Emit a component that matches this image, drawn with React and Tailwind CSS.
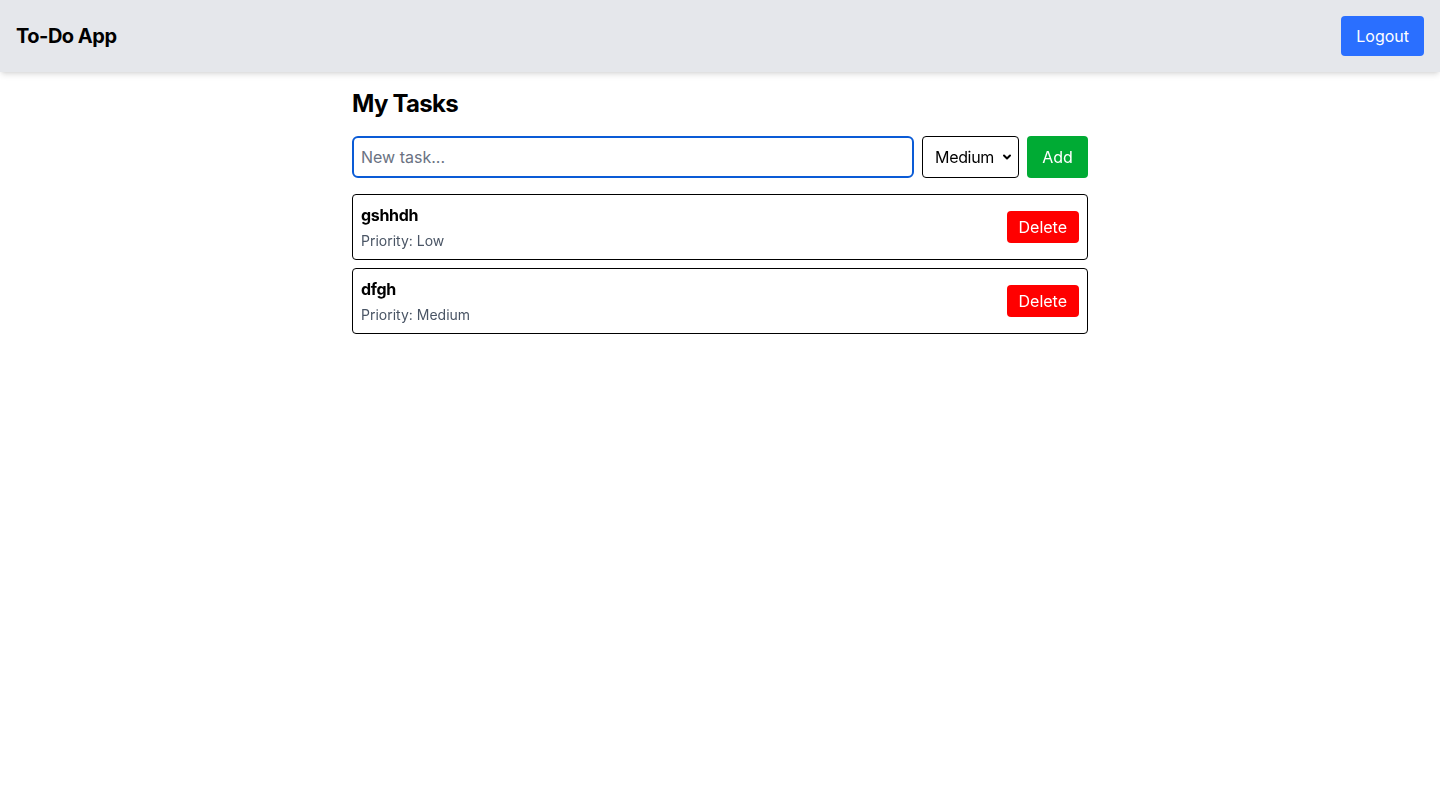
import React, { useState } from 'react';

const initialTasks = [
  { id: 1, title: 'gshhdh', priority: 'Low' },
  { id: 2, title: 'dfgh', priority: 'Medium' },
];

const App = () => {
  const [tasks, setTasks] = useState(initialTasks);
  const [text, setText] = useState('');
  const [priority, setPriority] = useState('Medium');

  const addTask = () => {
    if (!text.trim()) return;
    setTasks([...tasks, { id: Date.now(), title: text, priority }]);
    setText('');
  };

  const deleteTask = (id) => {
    setTasks(tasks.filter((t) => t.id !== id));
  };

  return (
    <div className="min-h-screen bg-white text-black font-['Inter','Liberation_Sans',sans-serif]">
      <nav className="flex items-center justify-between bg-[#e5e7eb] px-4 py-4 shadow-md">
        <h1 className="text-xl font-bold tracking-[-0.025em]">To-Do App</h1>
        <button className="rounded bg-[#2a6fff] px-[15px] py-2 text-white">Logout</button>
      </nav>

      <div className="mx-auto max-w-3xl p-4">
        <h2 className="mb-4 text-2xl font-bold tracking-[-0.03em]">My Tasks</h2>

        <div className="mb-4 flex gap-2">
          <input
            autoFocus
            value={text}
            onChange={(e) => setText(e.target.value)}
            placeholder="New task..."
            className="flex-1 rounded-md border-2 border-[#0a5bd6] px-[7px] py-[7px] outline-none placeholder:text-gray-500"
          />
          <div className="relative">
            <select
              value={priority}
              onChange={(e) => setPriority(e.target.value)}
              className="h-[42px] w-[97px] appearance-none rounded border border-black bg-white pl-[12px] pr-[14px] text-base tracking-[-0.02em]"
            >
              <option>Low</option>
              <option>Medium</option>
              <option>High</option>
            </select>
            <svg
              className="pointer-events-none absolute right-[6px] top-1/2 h-3 w-3 -translate-y-1/2"
              viewBox="0 0 12 12"
              fill="none"
              stroke="black"
              strokeWidth="2"
              strokeLinecap="round"
              strokeLinejoin="round"
            >
              <path d="M3 4.5l3 3 3-3" />
            </svg>
          </div>
          <button onClick={addTask} className="w-[61px] rounded bg-[#00ab34] text-white">
            Add
          </button>
        </div>

        <ul>
          {tasks.map((task) => (
            <li
              key={task.id}
              className="mb-2 flex items-center justify-between rounded border border-black p-2"
            >
              <div>
                <p className="font-bold tracking-[-0.02em]">{task.title}</p>
                <p className="mt-1 text-sm text-[#4a5565]">Priority: {task.priority}</p>
              </div>
              <button
                onClick={() => deleteTask(task.id)}
                className="rounded bg-[#ff0000] px-3 py-1 text-white"
              >
                Delete
              </button>
            </li>
          ))}
        </ul>
      </div>
    </div>
  );
};

export default App;
